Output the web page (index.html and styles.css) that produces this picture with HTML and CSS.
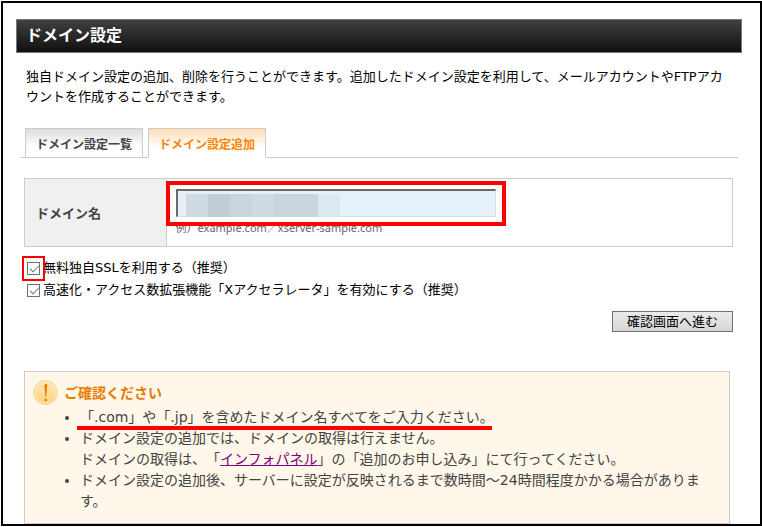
FILE: index.html
```html
<!DOCTYPE html>
<html lang="ja">
<head>
<meta charset="utf-8">
<title>ドメイン設定</title>
<link rel="stylesheet" href="styles.css">
</head>
<body>
<main class="frame">
  <h1 class="title">ドメイン設定</h1>
  <p class="intro">独自ドメイン設定の追加、削除を行うことができます。追加したドメイン設定を利用して、メールアカウントやFTPアカウントを作成することができます。</p>
  <nav class="tabs">
    <a class="tab" href="#list">ドメイン設定一覧</a>
    <a class="tab tab-active" href="#add">ドメイン設定追加</a>
  </nav>
  <form class="form">
    <table class="fields">
      <tr>
        <th scope="row"><label for="domain">ドメイン名</label></th>
        <td>
          <div class="domain">
            <input class="domain-input" id="domain" type="text">
            <div class="mosaic"><i class="m2"></i><i class="m4"></i><i class="m3"></i><i class="m2"></i><i class="m3"></i><i class="m3"></i><i class="m1"></i></div>
          </div>
          <p class="hint">例）example.com／xserver-sample.com</p>
        </td>
      </tr>
    </table>
    <div class="options">
      <label class="option"><span class="check check-marked"><input type="checkbox" checked></span>無料独自SSLを利用する（推奨）</label>
      <label class="option"><span class="check"><input type="checkbox" checked></span>高速化・アクセス数拡張機能「Xアクセラレータ」を有効にする（推奨）</label>
    </div>
    <div class="actions"><button class="submit" type="submit">確認画面へ進む</button></div>
  </form>
  <section class="notice">
    <svg class="notice-icon" viewBox="0 0 25 25" aria-hidden="true">
      <defs><linearGradient id="disc" x1="0" y1="0" x2="0" y2="1"><stop offset="0" stop-color="#ffe6b8"/><stop offset="1" stop-color="#ffd27a"/></linearGradient></defs>
      <circle cx="12.5" cy="12.5" r="12" fill="url(#disc)" stroke="#fbd99b"/>
      <circle cx="12.5" cy="12.5" r="10.5" fill="none" stroke="#ffe9c2" stroke-width="1"/>
      <path d="M11.300 5Q13 3.200 14.300 4.600L13.200 17H12.500Z" fill="#e87a00"/>
      <circle cx="12.7" cy="20" r="1.300" fill="#e87a00"/>
    </svg>
    <div class="notice-body">
      <h2 class="notice-title">ご確認ください</h2>
      <ul class="notes">
        <li class="marked">「.com」や「.jp」を含めたドメイン名すべてをご入力ください。</li>
        <li>ドメイン設定の追加では、ドメインの取得は行えません。<br>ドメインの取得は、「<a class="link" href="#panel">インフォパネル</a>」の「追加のお申し込み」にて行ってください。</li>
        <li>ドメイン設定の追加後、サーバーに設定が反映されるまで数時間～24時間程度かかる場合があります。</li>
      </ul>
    </div>
  </section>
</main>
</body>
</html>
```
FILE: styles.css
```css
* { box-sizing: border-box; }
body {
  margin: 0;
  padding: 1px 0 1px 1px;
  background: #fff;
  color: #000;
  font: 13px/20px "DejaVu Sans", "Noto Sans CJK JP", sans-serif;
  text-spacing-trim: space-all;
}
.frame {
  min-height: calc(100vh - 2px);
  border: 2px solid #000;
  padding: 16px 18px 0 13px;
}
.title {
  margin: 0;
  padding: 0 9px;
  border: 1px solid #777;
  background: linear-gradient(#404040, #101010);
  color: #fff;
  font-size: 16px;
  line-height: 32px;
}
.intro { margin: 14px 8px 0 10px; }
.tabs {
  display: flex;
  gap: 5px;
  margin: 21px 4px 0;
  padding: 0 5px;
  border-bottom: 1px solid #ccc;
}
.tab {
  margin-bottom: -1px;
  padding: 4px 10px 0;
  border: 1px solid #ccc;
  background: linear-gradient(#ddd, #fff 65%);
  color: #444;
  font-size: 12px;
  font-weight: 700;
  line-height: 24px;
  text-decoration: none;
}
.tab-active {
  border-bottom-color: #fff;
  background: linear-gradient(#ffdcb5, #fff 65%);
  color: #ff8400;
}
.form { margin: 20px 9px 0 8px; }
.fields {
  width: 100%;
  border-collapse: collapse;
}
.fields th, .fields td {
  border: 1px solid #ccc;
  padding: 10px 9px 8px;
  text-align: left;
}
.fields th {
  width: 20%;
  padding-left: 11px;
  background: #f0f0f0;
  color: #444;
}
.domain {
  position: relative;
  width: 320px;
  max-width: 100%;
  height: 29px;
}
.domain::after {
  content: "";
  position: absolute;
  inset: -8px -10px;
  border: 4px solid #f00;
  pointer-events: none;
}
.domain-input {
  display: block;
  width: 100%;
  height: 28px;
  border: 2px solid #696969;
  border-right: 1px solid #ddd;
  border-bottom: 1px solid #ddd;
  background: #e4f1fa;
  font: inherit;
}
.mosaic {
  position: absolute;
  left: 10px;
  top: 5px;
  display: flex;
}
.mosaic i { width: 22px; height: 23px; }
.m1 { background: #dce8f1; }
.m2 { background: #d0dae2; }
.m3 { background: #cad4dd; }
.m4 { background: #c2ccd5; }
.hint {
  margin: 0;
  color: #666;
  font-family: "Noto Sans", "Noto Sans CJK JP", sans-serif;
  font-size: 11px;
  line-height: 20px;
}
.options { padding: 10px 3px 0; }
.option {
  display: flex;
  align-items: center;
  gap: 3px;
  line-height: 22px;
}
.check { position: relative; display: flex; }
.check input {
  appearance: none;
  position: relative;
  width: 13px;
  height: 13px;
  margin: 0;
  border: 1px solid #707070;
}
.check input:checked::after {
  content: "";
  position: absolute;
  left: 2px;
  top: 2px;
  width: 8px;
  height: 4px;
  border: solid #777;
  border-width: 0 0 1px 1px;
  transform: rotate(-45deg);
}
.check-marked::after {
  content: "";
  position: absolute;
  inset: -6px -5px;
  border: 2px solid #f00;
}
.actions {
  display: flex;
  justify-content: flex-end;
  margin-top: 10px;
}
.submit {
  padding: 0 14px;
  border: 1px solid #707070;
  border-radius: 0;
  background: linear-gradient(#ebebeb, #d6d6d6);
  color: #000;
  font: inherit;
  line-height: 19px;
}
.notice {
  display: flex;
  gap: 6px;
  margin: 39px 12px 0 8px;
  padding: 8px 12px 11px 8px;
  border: 1px solid #ccc;
  background: #fff7e9;
  color: #444;
  font-size: 14px;
  line-height: 21px;
}
.notice-icon { flex: none; width: 25px; height: 25px; }
.notice-title {
  margin: 0;
  padding: 3px 0;
  color: #e87a00;
  font-size: 14px;
  line-height: 21px;
}
.notes { margin: 0; padding-left: 16px; }
.marked { position: relative; }
.marked::after {
  content: "";
  position: absolute;
  left: -3px;
  bottom: -2px;
  width: 415px;
  height: 4px;
  background: #f00;
}
.link { color: #800080; }
```
